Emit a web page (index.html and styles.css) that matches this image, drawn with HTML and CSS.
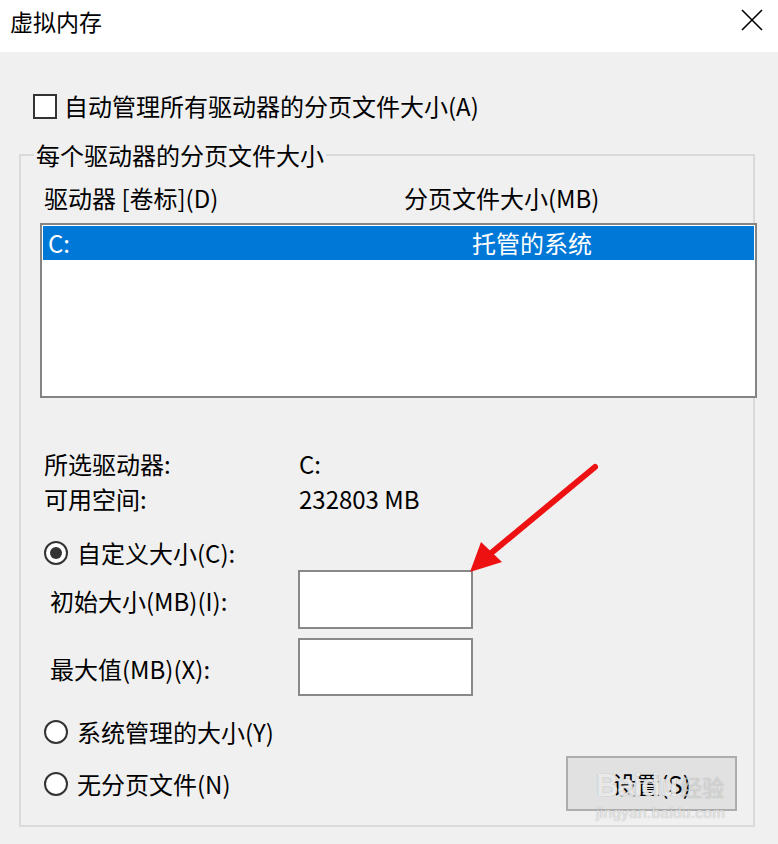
FILE: index.html
```html
<!DOCTYPE html>
<html lang="zh-CN">
<head>
<meta charset="utf-8">
<title>虚拟内存</title>
<link rel="stylesheet" href="styles.css">
</head>
<body>
<div class="window">
  <header class="titlebar">
    <span class="title">虚拟内存</span>
    <svg class="close" width="22" height="22" viewBox="0 0 22 22" aria-hidden="true">
      <path d="M1 1 L21 21 M21 1 L1 21" stroke="#000" stroke-width="1.6" fill="none"/>
    </svg>
  </header>
  <main class="content">
    <div class="check-row">
      <span class="checkbox"></span>
      <span>自动管理所有驱动器的分页文件大小(A)</span>
    </div>
    <section class="group">
      <div class="legend">每个驱动器的分页文件大小</div>
      <div class="col-heads">
        <span class="head-drive">驱动器 [卷标](D)</span>
        <span>分页文件大小(MB)</span>
      </div>
      <div class="listbox">
        <div class="list-row selected">
          <span class="cell-drive">C:</span>
          <span>托管的系统</span>
        </div>
      </div>
      <div class="info">
        <div class="info-row"><span class="info-label">所选驱动器:</span><span>C:</span></div>
        <div class="info-row"><span class="info-label">可用空间:</span><span>232803 MB</span></div>
      </div>
      <div class="radio-row first-radio">
        <span class="radio checked"></span>
        <span>自定义大小(C):</span>
      </div>
      <div class="field-row field-initial">
        <span class="field-label">初始大小(MB)(I):</span>
        <span class="textbox tall"></span>
      </div>
      <div class="field-row field-max">
        <span class="field-label">最大值(MB)(X):</span>
        <span class="textbox"></span>
      </div>
      <div class="radio-row second-radio">
        <span class="radio"></span>
        <span>系统管理的大小(Y)</span>
      </div>
      <div class="last-row">
        <div class="radio-inline">
          <span class="radio"></span>
          <span>无分页文件(N)</span>
        </div>
        <button class="btn">设置(S)</button>
      </div>
    </section>
  </main>

  <svg class="arrow" width="150" height="125" viewBox="0 0 150 125" aria-hidden="true">
    <line x1="135" y1="12" x2="30" y2="99" stroke="#ee1111" stroke-width="6" stroke-linecap="round"/>
    <polygon points="10,117 21,87 42,107" fill="#ee1111"/>
  </svg>

  <div class="watermark">
    <div class="wm-brand"><span class="wm-bai">Baidu</span><span class="wm-jy">经验</span></div>
    <div class="wm-url">jingyan.baidu.com</div>
  </div>
</div>
</body>
</html>
```

FILE: styles.css
```css
* { box-sizing: border-box; }

html, body {
  margin: 0;
  padding: 0;
}

body {
  width: 778px;
  height: 844px;
  overflow: hidden;
  font-family: "Noto Sans CJK SC", "Microsoft YaHei", "Noto Sans", sans-serif;
  font-size: 24px;
  color: #000;
  background: #f0f0f0;
}

.window {
  position: relative;
  width: 778px;
  height: 844px;
}

.titlebar {
  height: 52px;
  background: #fff;
  display: flex;
  justify-content: space-between;
  align-items: flex-start;
  padding: 6px 15px 0 10px;
}

.title {
  line-height: 30px;
  font-size: 23px;
}

.close {
  margin-top: 3px;
}

.content {
  height: 792px;
  background: #f0f0f0;
  padding-top: 39px;
}

.check-row {
  display: flex;
  align-items: center;
  height: 30px;
  padding-left: 33px;
  gap: 7px;
  line-height: 30px;
}

.checkbox {
  width: 24px;
  height: 25px;
  border: 2px solid #333;
  background: #fff;
}

.group {
  margin: 33px 23px 0 19px;
  border: 2px solid #dadada;
  display: flex;
  flex-direction: column;
  padding-bottom: 14px;
}

.legend {
  align-self: flex-start;
  margin-top: -16px;
  margin-left: 13px;
  padding: 0 2px;
  line-height: 30px;
  background: #f0f0f0;
}

.col-heads {
  display: flex;
  margin-top: 13px;
  padding-left: 23px;
  line-height: 30px;
}

.head-drive {
  width: 360px;
}

.listbox {
  align-self: flex-start;
  margin-top: 10px;
  margin-left: 19px;
  width: 717px;
  height: 175px;
  border: 2px solid #848484;
  background: #fff;
  padding: 1px;
}

.list-row {
  display: flex;
  height: 34px;
  line-height: 34px;
  padding-left: 5px;
}

.list-row.selected {
  background: #0078d7;
  color: #fff;
}

.cell-drive {
  width: 424px;
}

.info {
  margin-top: 48px;
  padding-left: 23px;
}

.info-row {
  display: flex;
  line-height: 35px;
  height: 35px;
}

.info-label {
  width: 255px;
}

.radio-row,
.radio-inline {
  display: flex;
  align-items: center;
  gap: 9px;
  line-height: 30px;
  height: 30px;
}

.radio-row {
  padding-left: 23px;
}

.first-radio { margin-top: 22px; }
.second-radio { margin-top: 21px; }

.radio {
  width: 24px;
  height: 24px;
  border: 2px solid #333;
  border-radius: 50%;
  background: #fff;
  display: flex;
  align-items: center;
  justify-content: center;
}

.radio.checked::after {
  content: "";
  width: 12px;
  height: 12px;
  border-radius: 50%;
  background: #333;
}

.field-row {
  display: flex;
  align-items: center;
  padding-left: 29px;
}

.field-initial { margin-top: 2px; }
.field-max { margin-top: 9px; }

.field-label {
  width: 248px;
  line-height: 30px;
  padding-top: 3px;
}

.textbox {
  width: 175px;
  height: 58px;
  border: 2px solid #888;
  background: #fff;
}

.textbox.tall {
  height: 59px;
}

.last-row {
  margin-top: 9px;
  height: 55px;
  display: flex;
  align-items: center;
  justify-content: space-between;
  padding-left: 23px;
  padding-right: 16px;
}

.btn {
  width: 171px;
  height: 55px;
  border: 2px solid #adadad;
  background: #e1e1e1;
  font-family: inherit;
  font-size: 24px;
  color: #000;
  padding: 0;
  line-height: 30px;
}

.arrow {
  position: absolute;
  left: 460px;
  top: 455px;
}

.watermark {
  position: absolute;
  left: 596px;
  top: 768px;
  width: 150px;
  white-space: nowrap;
  pointer-events: none;
  color: rgba(255, 255, 255, 0.8);
  text-shadow: 0 0 1px rgba(120, 120, 120, 0.7);
}

.wm-brand {
  display: flex;
  align-items: baseline;
  gap: 3px;
  line-height: 36px;
  height: 36px;
}

.wm-bai {
  font-family: "Liberation Sans", Arial, sans-serif;
  font-weight: bold;
  font-size: 31px;
  letter-spacing: -1px;
}

.wm-jy {
  font-size: 22px;
  color: rgba(255, 255, 255, 0.55);
}

.wm-url {
  font-family: "Liberation Sans", Arial, sans-serif;
  font-size: 15px;
  line-height: 18px;
  letter-spacing: 0.5px;
  color: rgba(255, 255, 255, 0.7);
}
```
